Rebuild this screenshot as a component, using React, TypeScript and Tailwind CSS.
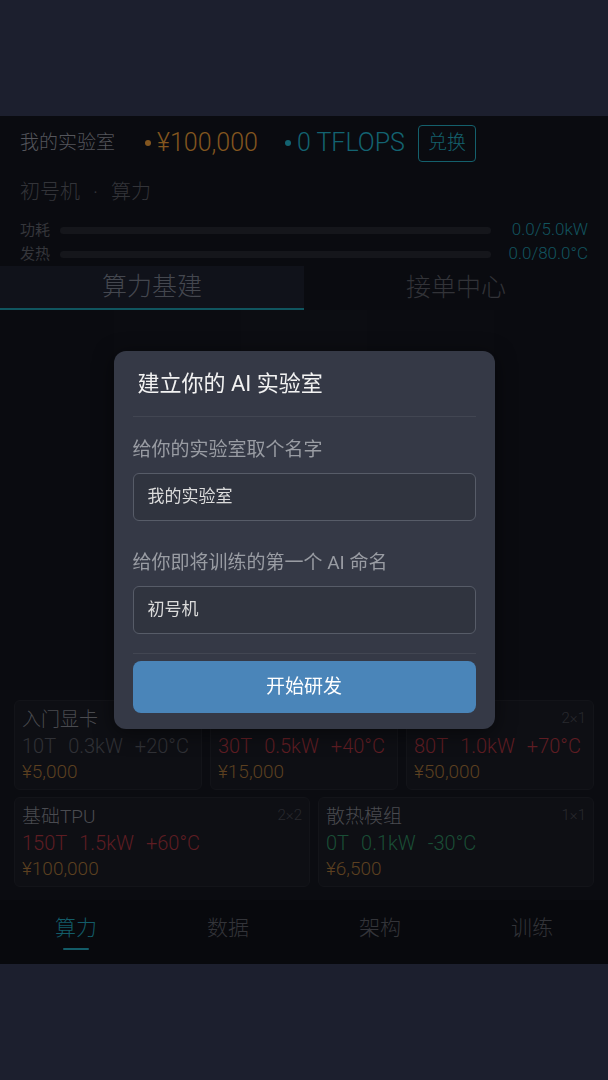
import React from 'react'

const font = { fontFamily: 'Roboto, "Noto Sans CJK SC", "Noto Sans", sans-serif' }

interface Part {
  id: string
  name: string
  size: string
  stats: string[]
  tone: 'gray' | 'red' | 'green'
  price: string
}

const rowOne: Part[] = [
  { id: 'gpu1', name: '入门显卡', size: '1×1', stats: ['10T', '0.3kW', '+20°C'], tone: 'gray', price: '¥5,000' },
  { id: 'gpu2', name: '进阶显卡', size: '1×1', stats: ['30T', '0.5kW', '+40°C'], tone: 'red', price: '¥15,000' },
  { id: 'gpu3', name: '专业显卡', size: '2×1', stats: ['80T', '1.0kW', '+70°C'], tone: 'red', price: '¥50,000' }
]

const rowTwo: Part[] = [
  { id: 'tpu', name: '基础TPU', size: '2×2', stats: ['150T', '1.5kW', '+60°C'], tone: 'red', price: '¥100,000' },
  { id: 'cool', name: '散热模组', size: '1×1', stats: ['0T', '0.1kW', '-30°C'], tone: 'green', price: '¥6,500' }
]

const toneClass = {
  gray: 'text-[#303136]',
  red: 'text-[#5e1d23]',
  green: 'text-[#1a4e36]'
}

function PartCard({ part }: { part: Part }) {
  return (
    <div className="flex-1 h-[90px] rounded-md bg-[#0e0f14] border border-[#131419] px-[7px] pt-[6px] font-light">
      <div className="flex items-start justify-between">
        <span className="text-[19px] leading-[26px] text-[#4a4b50]">{part.name}</span>
        <span className="text-[15px] leading-[22px] text-[#28292e]">{part.size}</span>
      </div>
      <div className={`flex gap-[12px] text-[20px] leading-[26px] ${toneClass[part.tone]}`}>
        {part.stats.map((s) => (
          <span key={s}>{s}</span>
        ))}
      </div>
      <div className="text-[19px] leading-[26px] text-[#5c4020]">{part.price}</div>
    </div>
  )
}

function Meter({ label, value }: { label: string; value: string }) {
  return (
    <div className="flex items-center h-6 px-5">
      <span className="text-[15px] text-[#35363b] w-10">{label}</span>
      <div className="flex-1 h-[7px] rounded-full bg-[#15161b]" />
      <span className="w-[97px] text-right text-[17px] font-light text-[#12545f]">{value}</span>
    </div>
  )
}

export default function App() {
  const navItems = ['算力', '数据', '架构', '训练']

  return (
    <div className="min-h-screen bg-[#1c1f2e] pt-[116px]" style={font}>
      <div className="h-[848px] bg-[#0a0b10] flex flex-col">
        {/* Header */}
        <div className="h-[54px] flex items-center px-5 shrink-0 font-light">
          <span className="text-[19px] text-[#55565c]">我的实验室</span>
          <span className="ml-[30px] text-[25px] text-[#83561f] flex items-center">
            <span className="w-[6px] h-[6px] rounded-full bg-[#83561f] mr-[6px]" />
            ¥100,000
          </span>
          <span className="ml-[27px] text-[25px] text-[#136371] flex items-center">
            <span className="w-[6px] h-[6px] rounded-full bg-[#136371] mr-[6px]" />
            0 TFLOPS
          </span>
          <span className="ml-[13px] h-[37px] px-[9px] flex items-center border border-[#14606c] rounded text-[19px] text-[#14606c]">
            兑换
          </span>
        </div>

        <div className="h-[44px] flex items-center px-5 text-[20px] font-light text-[#333439] shrink-0">
          初号机<span className="mx-[13px]">·</span>算力
        </div>

        <div className="shrink-0 pt-1">
          <Meter label="功耗" value="0.0/5.0kW" />
          <Meter label="发热" value="0.0/80.0°C" />
        </div>

        {/* Tabs */}
        <div className="h-[44px] flex shrink-0 font-light">
          <div className="flex-1 bg-[#10121a] border-b-2 border-[#10555f] flex items-center justify-center text-[25px] text-[#44474f]">
            算力基建
          </div>
          <div className="flex-1 flex items-center justify-center text-[25px] text-[#323338]">接单中心</div>
        </div>

        {/* Grid area */}
        <div className="h-[380px] shrink-0 flex justify-center">
          <div className="w-[380px] h-full grid grid-cols-3">
            <div className="bg-[#0b0c11]" />
            <div className="bg-[#0c0d12]" />
            <div className="bg-[#0b0c11]" />
          </div>
        </div>

        {/* Parts */}
        <div className="flex-1 bg-[#0b0c11] px-[14px] pt-[10px] flex flex-col gap-[7px]">
          <div className="flex gap-2">
            {rowOne.map((p) => (
              <PartCard key={p.id} part={p} />
            ))}
          </div>
          <div className="flex gap-2">
            <div className="w-[296px]">
              <PartCard part={rowTwo[0]} />
            </div>
            <div className="flex-1 flex">
              <PartCard part={rowTwo[1]} />
            </div>
          </div>
        </div>

        {/* Bottom nav */}
        <div className="h-[64px] shrink-0 flex bg-[#08090d] font-light">
          {navItems.map((item, i) => (
            <div key={item} className="flex-1 flex flex-col items-center justify-center">
              <span className={`text-[21px] leading-[28px] ${i === 0 ? 'text-[#135c68]' : 'text-[#333439]'}`}>{item}</span>
              <span className={`mt-[6px] h-[2px] w-[26px] rounded ${i === 0 ? 'bg-[#135c68]' : 'bg-transparent'}`} />
            </div>
          ))}
        </div>
      </div>

      {/* Modal */}
      <div className="fixed inset-0 flex items-center justify-center">
        <div className="w-[381px] h-[378px] rounded-xl bg-[#353946] shadow-[0_4px_20px_rgba(0,0,0,0.5)] px-[19px] flex flex-col">
          <div className="h-[66px] flex items-center pl-[5px] text-[22px] text-[#f2f2f2] border-b border-[#424652]">
            建立你的 AI 实验室
          </div>
          <div className="mt-[20px] text-[19px] leading-[26px] text-[#999ca3]">给你的实验室取个名字</div>
          <div className="mt-[10px] h-[48px] rounded-md border border-[#575c68] bg-[#30343f] flex items-center px-[14px] text-[17px] text-[#dcdcdc]">
            我的实验室
          </div>
          <div className="mt-[29px] text-[19px] leading-[26px] text-[#999ca3]">给你即将训练的第一个 AI 命名</div>
          <div className="mt-[10px] h-[48px] rounded-md border border-[#575c68] bg-[#30343f] flex items-center px-[14px] text-[17px] text-[#dcdcdc]">
            初号机
          </div>
          <div className="mt-[19px] border-t border-[#424652]" />
          <div className="mt-[7px] h-[52px] rounded-lg bg-[#4a85b9] flex items-center justify-center text-[19px] text-white">
            开始研发
          </div>
        </div>
      </div>
    </div>
  )
}
